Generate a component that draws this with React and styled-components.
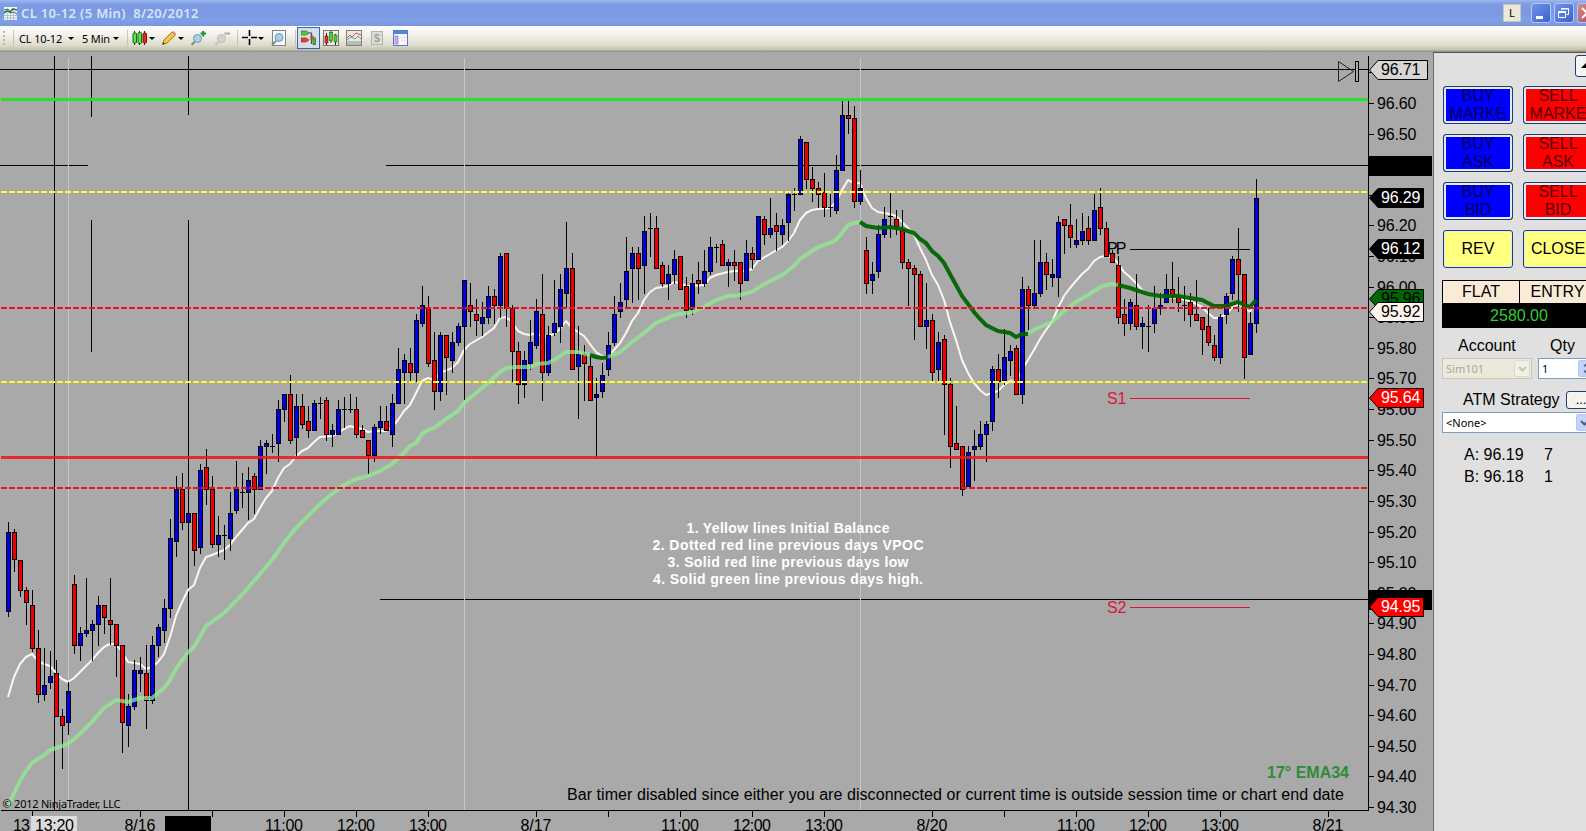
import React from 'react';
import styled, { createGlobalStyle } from 'styled-components';

const GlobalStyle = createGlobalStyle`
  html,
  body {
    margin: 0;
    overflow: hidden;
    background: #a9a9a9;
  }

  * {
    box-sizing: border-box;
  }
`;

const Window = styled.div`
  width: 1586px;
  height: 831px;
  display: flex;
  flex-direction: column;
  overflow: hidden;
  font-family: 'Liberation Sans', Arial, sans-serif;
  color: #000;
`;

const TitleBar = styled.header`
  flex: none;
  height: 26px;
  width: 1600px;
  padding: 0 0 0 4px;
  display: flex;
  align-items: center;
  background: linear-gradient(#9db9ee 0, #7f9de6 4px, #7b99e1 12px, #7e9fe6 20px, #7c96dd 100%);
`;

const Title = styled.span`
  flex: 1;
  margin-left: 4px;
  font: 600 13px/24px 'Noto Sans', sans-serif;
  letter-spacing: 0.34px;
  white-space: pre;
  color: #d8e4f8;
`;

const LinkButton = styled.div`
  width: 18px;
  height: 18px;
  margin-right: 10px;
  background: #ece9d8;
  border: 1px solid #c8c6b4;
  font: 11px/16px 'Noto Sans', sans-serif;
  text-align: center;
`;

const WindowButton = styled.div`
  width: 20px;
  height: 20px;
  margin-right: 3px;
  border: 1px solid #b4c8f6;
  border-radius: 3px;
  background: ${({ $close }) =>
    $close ? 'linear-gradient(135deg, #d08a90, #b0485a)' : 'linear-gradient(135deg, #6f94ea, #3a62cf)'};

  svg {
    display: block;
  }
`;

const Toolbar = styled.nav`
  flex: none;
  height: 26px;
  display: flex;
  align-items: center;
  padding: 0 0 2px 3px;
  background: linear-gradient(#fdfdfb 0, #f4f3ee 8px, #dedccd 19px, #c4c2aa 24px, #96958a 25px);
  font: 11px 'Noto Sans', sans-serif;

  svg {
    display: block;
    flex: none;
  }
`;

const Grip = styled.div`
  width: 2px;
  height: 15px;
  background: repeating-linear-gradient(#b9b7a6 0 2px, transparent 2px 4px);
`;

const Separator = styled.div`
  width: 1px;
  height: 17px;
  margin-left: ${({ $gap }) => $gap}px;
  background: #c9c7b8;
`;

const ToolLabel = styled.span`
  width: ${({ $width }) => $width}px;
  margin-left: ${({ $gap }) => $gap}px;
  letter-spacing: -0.15px;
  white-space: nowrap;
`;

const Caret = styled.i`
  margin-left: ${({ $gap }) => $gap}px;
  border: 3px solid transparent;
  border-top-color: #000;
  border-bottom: 0;
`;

const Tool = styled.div`
  width: 16px;
  height: 16px;
  margin-left: ${({ $gap }) => $gap}px;
`;

const ActiveTool = styled.div`
  width: 23px;
  height: 22px;
  margin-left: 1px;
  padding: 2px 3px;
  border: 1px solid #3f62ad;
  background: #d5dcea;
`;

const Workspace = styled.main`
  flex: 1;
  display: flex;
  min-height: 0;
`;

const ChartSvg = styled.svg`
  flex: none;
  display: block;
  background: #a9a9a9;
  font-family: 'Liberation Sans', Arial, sans-serif;
  font-size: 16px;
`;

const Panel = styled.aside`
  flex: 1;
  padding: 2px 0 0 9px;
  border-left: 1px solid #6f6d60;
  border-top: 1px solid #55534b;
  background: #e0e0e0;
  overflow: hidden;
  font-size: 16px;
`;

const CollapseButton = styled.div`
  width: 22px;
  height: 22px;
  margin: 0 0 9px 132px;
  padding: 7px 5px;
  border: 1px solid #1c3f73;
  border-radius: 3px;
  background: #f6f6f2;
`;

const OrderGrid = styled.div`
  display: grid;
  grid-template-columns: 70px 70px;
  grid-auto-rows: 38px;
  gap: 10px;
  width: 150px;
`;

const OrderButton = styled.div`
  display: flex;
  align-items: center;
  justify-content: center;
  border: 1px solid #1c3f73;
  border-radius: 3px;
  background: ${({ $color }) => $color};
  box-shadow: inset 0 0 0 ${({ $plain }) => ($plain ? 1 : 2)}px #e4ebf6;
  line-height: 18px;
  text-align: center;
  overflow: hidden;
  color: ${({ $ink }) => $ink || '#000'};
`;

const Position = styled.div`
  display: grid;
  grid-template-columns: 76px 76px;
  width: 153px;
  margin: 12px 0 0 -1px;
  border: 1px solid #000;
  background: #faebd7;
  line-height: 22px;
  text-align: center;

  > :nth-child(2) {
    border-left: 1px solid #000;
  }
`;

const Pnl = styled.div`
  grid-column: span 2;
  height: 24px;
  line-height: 25px;
  background: #000;
  color: #32cd32;
`;

const FieldLabels = styled.div`
  display: flex;
  height: 30px;
  padding-left: 15px;
  line-height: 36px;

  > :first-child {
    width: 92px;
  }
`;

const FieldRow = styled.div`
  display: flex;
  width: 170px;
  margin-left: -1px;
`;

const Field = styled.div`
  flex: none;
  display: flex;
  align-items: center;
  justify-content: space-between;
  width: ${({ $width }) => $width}px;
  height: 21px;
  padding: 1px 1px 1px 3px;
  border: 1px solid ${({ $disabled }) => ($disabled ? '#c9c7ba' : '#7f9db9')};
  background: ${({ $disabled }) => ($disabled ? '#ebe9da' : '#fff')};
  color: ${({ $disabled }) => ($disabled ? '#aca899' : '#000')};
  font: 11px 'Noto Sans', sans-serif;

  & + & {
    margin-left: 6px;
  }
`;

const FieldButton = styled.span`
  display: flex;
  align-items: center;
  justify-content: center;
  width: 16px;
  height: 17px;
  border-radius: 2px;
  border: 1px solid ${({ $disabled }) => ($disabled ? '#dbd9cb' : '#b6c8f4')};
  background: ${({ $disabled }) => ($disabled ? '#f1f0e6' : '#c3d3fb')};
`;

const StrategyRow = styled.div`
  display: flex;
  align-items: center;
  height: 33px;
  width: 170px;
  padding: 8px 0 0 20px;
  white-space: nowrap;
`;

const MoreButton = styled.div`
  width: 32px;
  height: 18px;
  margin-left: 6px;
  border: 1px solid #1c3f73;
  border-radius: 3px;
  background: #f4f3ee;
  font-size: 13px;
  line-height: 16px;
  padding-left: 9px;
`;

const Quotes = styled.div`
  display: grid;
  grid-template-columns: 80px 20px;
  padding: 11px 0 0 21px;
  line-height: 22px;
`;

// One row per bar: [high, body top, body bottom, low, kind], in chart pixels.
const U = '#0000e0';
const D = '#ee0000';
const N = null;
const bars = [
  [522, 532, 612, 617, U], [529, 532, 560, 572, D], [560, 560, 591, 597, D], [587, 590, 603, 625, D],
  [590, 605, 649, 652, D], [630, 648, 695, 703, D], [648, 685, 695, 701, U], [651, 676, 683, 689, U],
  [660, 673, 717, 717, D], [709, 716, 726, 769, D], [682, 691, 723, 735, U], [575, 584, 646, 654, D],
  [627, 633, 646, 661, U], [578, 630, 634, 637, U], [620, 624, 631, 661, U], [596, 605, 625, 646, U],
  [605, 605, 618, 634, D], [578, 620, 625, 645, D], [624, 624, 646, 677, D], [645, 645, 723, 753, D],
  [694, 706, 726, 747, U], [660, 670, 707, 710, U], [657, 670, 674, 692, U], [645, 673, 701, 729, D],
  [636, 645, 701, 704, U], [624, 627, 646, 657, U], [599, 608, 631, 643, U], [519, 538, 609, 618, U],
  [476, 489, 542, 557, U], [473, 489, 523, 530, D], [495, 513, 523, 533, U], [513, 513, 551, 566, D],
  [464, 470, 548, 554, U], [449, 467, 490, 505, D], [476, 489, 545, 548, D], [516, 535, 545, 557, U],
  [525, 535, 535, 560, N], [492, 513, 539, 551, U], [461, 489, 511, 514, U], [473, 492, 492, 508, N],
  [467, 480, 493, 520, U], [473, 476, 490, 514, D], [440, 446, 490, 490, U], [440, 443, 447, 474, U],
  [434, 446, 446, 453, N], [400, 409, 444, 462, U], [394, 394, 410, 422, U], [375, 394, 441, 444, D],
  [394, 406, 438, 456, U], [394, 406, 425, 429, D], [406, 421, 431, 438, D], [400, 403, 431, 431, U],
  [397, 403, 403, 419, N], [397, 400, 435, 441, D], [424, 430, 435, 447, U], [400, 409, 435, 435, U],
  [397, 409, 409, 428, N], [394, 409, 409, 413, N], [397, 409, 435, 438, D], [425, 430, 438, 438, D],
  [440, 440, 456, 474, D], [424, 427, 456, 462, U], [406, 421, 428, 434, U], [406, 421, 431, 431, D],
  [394, 403, 435, 447, U], [348, 369, 404, 404, U], [354, 360, 373, 404, U], [348, 363, 373, 382, D],
  [314, 320, 373, 382, U], [286, 305, 324, 327, U], [296, 308, 364, 367, D], [332, 360, 392, 410, D],
  [332, 335, 392, 401, U], [335, 335, 358, 395, D], [332, 342, 361, 373, U], [323, 326, 343, 346, U],
  [280, 280, 327, 400, U], [283, 305, 312, 327, D], [299, 314, 321, 336, D], [302, 317, 324, 336, U],
  [286, 296, 318, 324, U], [289, 296, 306, 324, D], [253, 256, 306, 318, U], [253, 253, 309, 327, D],
  [305, 308, 352, 382, D], [342, 351, 385, 404, D], [351, 360, 385, 398, U], [320, 342, 364, 370, U],
  [299, 311, 346, 349, U], [274, 314, 373, 401, D], [326, 335, 373, 376, U], [280, 323, 333, 336, U],
  [274, 289, 327, 343, U], [222, 268, 294, 308, U], [253, 268, 370, 370, D], [326, 354, 367, 419, U],
  [345, 354, 364, 401, D], [357, 366, 401, 401, D], [378, 394, 398, 459, U], [363, 375, 392, 398, U],
  [332, 345, 370, 376, U], [296, 314, 343, 346, U], [283, 302, 312, 318, U], [237, 271, 300, 307, U],
  [247, 253, 269, 303, U], [247, 253, 269, 300, D], [216, 231, 266, 294, U], [213, 228, 228, 257, N],
  [216, 228, 269, 269, D], [262, 265, 284, 287, D], [265, 274, 284, 300, U], [250, 259, 275, 284, U],
  [256, 256, 290, 290, D], [277, 286, 311, 318, D], [274, 283, 310, 315, U], [262, 280, 284, 294, D],
  [250, 271, 284, 287, U], [237, 247, 272, 275, U], [244, 247, 247, 263, N], [240, 244, 266, 266, D],
  [259, 262, 266, 287, U], [250, 262, 266, 281, D], [262, 262, 284, 300, D], [240, 253, 281, 281, U],
  [247, 253, 260, 269, D], [216, 216, 260, 260, U], [216, 219, 235, 245, D], [198, 228, 235, 238, U],
  [213, 225, 232, 251, D], [219, 225, 235, 245, U], [191, 194, 223, 241, U], [188, 194, 194, 211, N],
  [136, 139, 195, 195, U], [142, 142, 180, 189, D], [167, 179, 189, 202, D], [182, 188, 195, 208, D],
  [173, 192, 208, 217, D], [194, 207, 207, 217, N], [155, 170, 211, 214, U], [100, 115, 171, 171, U],
  [100, 115, 119, 134, D], [106, 118, 202, 208, D], [170, 188, 202, 205, U], [237, 250, 284, 294, D],
  [262, 274, 281, 294, U], [225, 234, 272, 278, U], [207, 219, 235, 238, U], [191, 216, 216, 238, N],
  [210, 219, 227, 235, D], [210, 230, 263, 269, D], [259, 262, 269, 306, D], [265, 268, 275, 340, D],
  [271, 274, 327, 327, D], [283, 320, 327, 349, U], [314, 320, 373, 382, D], [332, 342, 370, 382, U],
  [335, 339, 385, 435, D], [378, 384, 447, 468, D], [406, 443, 450, 450, D], [446, 446, 490, 496, D],
  [446, 452, 487, 487, U], [430, 446, 450, 481, U], [421, 434, 447, 450, U], [421, 424, 435, 462, U],
  [366, 369, 422, 431, U], [354, 369, 382, 398, D], [329, 357, 382, 385, U], [345, 351, 361, 376, U],
  [345, 348, 395, 395, D], [277, 289, 395, 404, U], [286, 289, 306, 330, D], [240, 293, 306, 309, U],
  [240, 262, 294, 297, U], [253, 262, 275, 290, D], [259, 274, 278, 287, U], [216, 222, 278, 297, U],
  [219, 219, 226, 254, D], [204, 225, 238, 248, D], [219, 240, 245, 248, U], [213, 231, 241, 245, U],
  [216, 228, 241, 245, D], [194, 210, 241, 241, U], [188, 207, 229, 235, D], [222, 228, 257, 257, D],
  [250, 253, 263, 263, D], [256, 265, 318, 324, D], [299, 314, 324, 336, D], [299, 302, 324, 330, U],
  [274, 305, 327, 330, D], [317, 323, 327, 349, U], [305, 326, 326, 352, N], [286, 308, 324, 333, U],
  [293, 305, 309, 315, U], [274, 289, 303, 303, U], [262, 289, 295, 303, D], [277, 297, 303, 312, D],
  [286, 305, 305, 321, N], [293, 302, 315, 327, D], [280, 314, 321, 321, D], [317, 317, 330, 355, D],
  [308, 326, 343, 346, D], [335, 345, 358, 361, D], [314, 317, 358, 364, U], [293, 296, 315, 324, U],
  [256, 259, 294, 300, U], [228, 259, 275, 312, D], [274, 274, 358, 379, D], [312, 323, 355, 355, U],
  [179, 198, 324, 333, U],
];

const fastAverage =
  '8,697 14,677 20,664 26,657 32,654 38,661 44,664 50,666 56,673 62,679 68,682 74,678 92,660 98,653 104,647 110,644 116,644 122,652 128,662 140,664 146,669 152,667 158,662 164,654 170,637 176,616 182,602 188,590 194,585 200,568 206,557 212,555 224,550 230,545 236,537 242,530 248,523 254,519 260,508 266,498 272,491 278,478 284,468 290,464 296,456 302,451 308,448 314,442 320,437 332,436 338,433 344,429 350,426 356,428 362,429 368,432 374,431 386,431 392,427 398,420 404,411 410,405 416,393 422,381 428,378 434,380 440,373 452,368 458,362 464,350 470,344 482,337 494,328 500,318 506,317 512,322 518,331 524,334 530,335 536,333 542,337 548,336 554,334 560,329 566,321 572,328 578,332 584,336 590,344 596,352 602,356 608,356 614,350 620,343 626,333 632,321 638,313 644,300 650,292 656,288 662,287 668,286 674,282 680,283 686,286 692,286 704,285 710,278 716,275 728,272 734,271 746,271 752,269 758,261 770,254 782,247 788,241 794,233 800,220 806,213 812,210 818,209 830,208 836,202 842,190 848,180 854,183 860,183 866,198 872,208 878,212 890,214 896,216 902,222 908,228 914,235 920,248 926,260 932,275 938,285 944,300 950,322 956,340 962,360 968,373 974,383 980,390 986,395 992,393 998,391 1004,385 1010,381 1016,382 1022,370 1028,360 1034,350 1040,339 1046,330 1052,322 1058,308 1064,296 1070,288 1076,281 1082,274 1088,269 1094,261 1100,257 1106,256 1112,257 1118,263 1124,272 1130,277 1136,283 1142,290 1148,294 1154,296 1166,297 1178,298 1190,301 1196,304 1202,307 1208,313 1214,318 1220,318 1226,314 1232,308 1238,304 1244,308 1250,312 1256,300';

const emaRising = [
  '8,808 11,800 20,781 26,771 32,763 44,755 50,750 56,748 62,746 68,744 80,734 92,722 104,708 116,700 128,702 140,698 152,698 158,693 164,688 170,680 176,669 188,652 194,647 206,626 224,613 240,597 260,574 272,560 284,543 296,528 308,516 320,504 332,494 344,485 356,479 368,476 380,471 392,464 403,454 410,446 416,443 422,434 428,430 434,428 446,419 458,411 464,403 476,393 488,383 500,372 506,368 518,367 530,367 536,364 548,363 554,360 566,352 578,352 590,355',
  '608,357 620,352 632,342 644,333 656,323 668,318 674,315 686,313 692,312 704,307 716,300 728,296 740,295 752,292 758,288 770,281 782,275 794,266 800,259 812,251 818,247 830,243 836,240 842,233 848,225 854,223 860,222',
  '1028,333 1040,327 1052,322 1064,311 1076,302 1088,295 1100,287 1106,285 1112,284 1118,285',
];
const emaFalling = [
  '590,355 596,357 602,358 608,357',
  '860,222 866,226 878,228 890,227 902,229 914,233 920,239 926,243 932,251 938,256 944,263 950,274 962,296 974,312 980,319 986,325 998,331 1010,333 1016,337 1022,334 1028,334',
  '1118,285 1130,288 1148,294 1160,296 1178,296 1190,298 1202,300 1214,306 1226,306 1238,302 1244,305 1250,307 1256,300',
];

const levels = [
  { y: 98, color: '#2be02b', size: 3 },
  { y: 191, color: '#ffff20', size: 2, dashed: true },
  { y: 307, color: '#ee1020', size: 2, dashed: true },
  { y: 381, color: '#ffff20', size: 2, dashed: true },
  { y: 456, color: '#f01818', size: 3, opacity: 0.88 },
  { y: 487, color: '#ee1020', size: 2, dashed: true },
];

const pivots = [
  { label: 'PP', y: 249, baseline: 254, color: '#000' },
  { label: 'S1', y: 398, baseline: 404, color: '#dc143c' },
  { label: 'S2', y: 607, baseline: 613, color: '#dc143c' },
];

const timeTicks = [
  [32], [140, '8/16'], [212], [284, '11:00'], [356, '12:00'], [428, '13:00'], [536, '8/17'], [608],
  [680, '11:00'], [752, '12:00'], [824, '13:00'], [932, '8/20'], [1004], [1076, '11:00'], [1148, '12:00'],
  [1220, '13:00'], [1328, '8/21'],
];

const tags = [
  { price: '96.71', y: 60, fill: '#d6d6d6', ink: '#000', right: 1427 },
  { price: '96.29', y: 188, fill: '#000', ink: '#fff' },
  { price: '96.12', y: 239, fill: '#000', ink: '#fff' },
  { price: '95.96', y: 289, fill: '#006400', ink: '#000' },
  { price: '95.92', y: 302, fill: '#fff5ee', ink: '#000' },
  { price: '95.64', y: 388, fill: '#ff0000', ink: '#fff' },
  { price: '94.95', y: 597, fill: '#ff0000', ink: '#fff' },
];

const notes = [
  ['1. Yellow lines Initial Balance', 533, 203],
  ['2. Dotted red line previous days VPOC', 550, 271],
  ['3. Solid red line previous days low', 567, 241],
  ['4. Solid green line previous days high.', 584, 270],
];

const priceToY = price => 103.5 + (96.6 - price) * 306.1;
const prices = Array.from({ length: 25 }, (_, i) => (96.7 - i * 0.1).toFixed(2));

// scale labels that sit entirely behind a marker
const coveredPrices = ['96.70', '96.40', '96.30'];

const Candle = ({ index, bar: [high, top, bottom, low, fill] }) => {
  const x = 6 + index * 6;
  return (
    <g>
      <rect x={x + 2} y={high} width="1" height={Math.max(low - high, 1)} />
      <rect x={x} y={top} width="5" height={Math.max(bottom - top, 1)} />
      {fill && <rect x={x + 1} y={top + 1} width="3" height={bottom - top - 2} fill={fill} />}
    </g>
  );
};

const PriceTag = ({ price, y, fill, ink, right = 1423 }) => (
  <g>
    <path
      d={`M1369.5 ${y + 10} L1378 ${y + 0.5} H${right + 0.5} V${y + 19.5} H1378 Z`}
      fill={fill}
      stroke="#000"
    />
    <text x="1381" y={y + 15} fill={ink} textLength="39.5">
      {price}
    </text>
  </g>
);

const Chart = () => (
  <ChartSvg width="1433" height="779" viewBox="0 52 1433 779">
    <g shapeRendering="crispEdges">
      <rect x="0" y="69" width="1368" height="1" />
      <rect x="0" y="165" width="88" height="1" />
      <rect x="386" y="165" width="982" height="1" />
      <rect x="380" y="599" width="988" height="1" />
      <rect x="54" y="56" width="1" height="754" />
      <rect x="91" y="56" width="1" height="61" />
      <rect x="91" y="220" width="1" height="132" />
      <rect x="188" y="56" width="1" height="59" />
      <rect x="188" y="220" width="1" height="590" />
      {[68, 464, 860].map(x => (
        <rect key={x} x={x} y="58" width="1" height="752" fill="#c6c6c6" />
      ))}
    </g>

    <polyline points={fastAverage} fill="none" stroke="#fff5ee" strokeWidth="2" strokeLinejoin="round" />

    <g shapeRendering="crispEdges">
      {bars.map((bar, i) => (
        <Candle key={i} index={i} bar={bar} />
      ))}
    </g>

    {emaRising.map(points => (
      <polyline key={points} points={points} fill="none" stroke="#90ee90" strokeOpacity="0.72" strokeWidth="4" />
    ))}
    {emaFalling.map(points => (
      <polyline key={points} points={points} fill="none" stroke="#006400" strokeOpacity="0.95" strokeWidth="4" />
    ))}

    <g shapeRendering="crispEdges">
      {levels.map(({ y, color, size, dashed, opacity }) => (
        <line
          key={y}
          x1="1"
          x2="1368"
          y1={y + size / 2}
          y2={y + size / 2}
          stroke={color}
          strokeWidth={size}
          strokeOpacity={opacity}
          strokeDasharray={dashed ? '6 2' : undefined}
        />
      ))}
    </g>

    {pivots.map(({ label, y, baseline, color }) => (
      <g key={label} fill={color}>
        <text x="1107" y={baseline} textLength="19.5">
          {label}
        </text>
        <rect x="1130" y={y} width="120" height="1" />
      </g>
    ))}

    <path d="M1338.5 61.5 V81.5 L1353.5 71.5 Z" fill="none" stroke="#222" />
    <rect x="1355.5" y="61.5" width="3" height="20" fill="#a9a9a9" stroke="#000" />

    <g fill="#fff" fontSize="14" fontWeight="bold" textAnchor="middle">
      {notes.map(([text, y, width]) => (
        <text key={y} x="788" y={y} textLength={width}>
          {text}
        </text>
      ))}
    </g>

    <text x="1267" y="778" textLength="82" fontWeight="bold" fill="#2e8b37">
      17° EMA34
    </text>
    <text x="567" y="800" textLength="777">
      Bar timer disabled since either you are disconnected or current time is outside session time or chart end date
    </text>
    <text x="2.5" y="808" textLength="118" fontSize="11" fontFamily="'Noto Sans', sans-serif">
      © 2012 NinjaTrader, LLC
    </text>

    <g shapeRendering="crispEdges">
      <rect x="1368" y="56" width="1" height="755" />
      <rect x="1" y="810" width="1368" height="1" />
    </g>

    {timeTicks.map(([x, label]) => (
      <g key={x}>
        <rect x={x} y="811" width="1" height="6" />
        {label && (
          <text x={x} y="830.5" textAnchor="middle" textLength={label.length > 4 ? 38 : 31}>
            {label}
          </text>
        )}
      </g>
    ))}
    <text x="13" y="830.5" textLength="17">
      13
    </text>
    <rect x="31" y="816" width="46" height="15" fill="#dcdcdc" />
    <text x="35" y="830.5" textLength="39">
      13:20
    </text>
    <rect x="165" y="816" width="46" height="15" />

    {prices.map(price => {
      const y = Math.round(priceToY(price) - 0.5);
      return (
        <g key={price}>
          <rect x="1369" y={y} width="5" height="1" />
          {!coveredPrices.includes(price) && (
            <text x="1377" y={y + 5.6} textLength="39.5">
              {price}
            </text>
          )}
        </g>
      );
    })}
    <rect x="1368" y="156" width="64" height="20" />
    <rect x="1368" y="590" width="64" height="20" />
    {tags.map(tag => (
      <PriceTag key={tag.price} {...tag} />
    ))}
  </ChartSvg>
);

const Chevron = ({ color = '#4d6185' }) => (
  <svg width="9" height="6" viewBox="0 0 9 6">
    <path d="M1 1 L4.5 4.5 L8 1" fill="none" stroke={color} strokeWidth="2" />
  </svg>
);

const ChartIcon = () => (
  <svg width="13" height="13" viewBox="0 0 13 13">
    <rect width="13" height="13" fill="#f2f4f0" />
    <path d="M0 8.5H13M0 11H13M3.5 6V13M6.5 6V13M9.5 6V13" stroke="#b5bfd0" />
    <path d="M0 6 L3 4 L6 5 L9 2 L13 3" fill="none" stroke="#1f7a3a" strokeWidth="1.6" />
    <path d="M0 3 L4 2 L7 6 L10 5 L13 7" fill="none" stroke="#3a5d9c" />
  </svg>
);

const CandlesIcon = () => (
  <svg width="16" height="16" viewBox="0 0 16 16">
    <path d="M2.5 1V15M7.5 1V15M12.5 1V15" stroke="#222" />
    <rect x="1" y="3" width="3.5" height="10" rx="1" fill="#5ae53c" stroke="#156a15" />
    <rect x="6" y="2.5" width="3.5" height="11" rx="1" fill="#5ae53c" stroke="#156a15" />
    <rect x="11" y="3" width="3.5" height="10" rx="1" fill="#e8281c" stroke="#7a1414" />
  </svg>
);

const PencilIcon = () => (
  <svg width="16" height="16" viewBox="0 0 16 16">
    <path d="M1.5 14.5 L3 10 L11 2 L14.5 5 L6 13 Z" fill="#f3c83c" stroke="#a8761c" />
    <path d="M11 2 L12.5 1 L15 3.5 L14.2 5 Z" fill="#d98d80" />
    <path d="M1.5 14.5 L2.3 12 L4 13.6 Z" fill="#333" />
  </svg>
);

const MagnifierIcon = ({ sign, faded }) => (
  <svg width="17" height="16" viewBox="0 0 17 16">
    <path d="M1.5 15 L5 11.5" stroke={faded ? '#c2c1ba' : '#8b8577'} strokeWidth="2" />
    <circle cx="7.5" cy="8.5" r="4" fill={faded ? '#d3d3d1' : '#a8cfe8'} stroke={faded ? '#bdbdb8' : '#7196b5'} />
    <path
      d={sign === '+' ? 'M10.5 3.5H16M13.2 1V6.5' : 'M10.5 3.5H16'}
      stroke={faded ? '#aaa9a2' : '#109a20'}
      strokeWidth="2"
    />
  </svg>
);

const CrosshairIcon = () => (
  <svg width="15" height="15" viewBox="0 0 15 15">
    <path d="M0 7.5H6M9 7.5H15M7.5 0V6M7.5 9V15" stroke="#000" strokeWidth="1.6" />
  </svg>
);

const ZoomFrameIcon = () => (
  <svg width="16" height="16" viewBox="0 0 16 16">
    <rect x="1.5" y=".5" width="13" height="15" fill="#f8f9fa" stroke="#7d8591" />
    <path d="M1 15 L5 11" stroke="#8b8577" strokeWidth="2" />
    <circle cx="8" cy="7.5" r="4" fill="#a8cfe8" stroke="#7196b5" />
  </svg>
);

const TraderIcon = () => (
  <svg width="16" height="16" viewBox="0 0 16 16">
    <path d="M0 1H5L8 3L5 5H0Z" fill="#4fce30" stroke="#2a7d1c" strokeWidth=".7" />
    <path d="M0 8H5L8 10L5 12H0Z" fill="#e0482c" stroke="#9c2617" strokeWidth=".7" />
    <path d="M8 3H10.5V14M10.5 7H13M13 8V15" fill="none" stroke="#4a544a" strokeWidth="1.2" />
    <rect x="12" y="8" width="2.6" height="6.5" fill="#46c832" stroke="#1d6a16" strokeWidth=".7" />
    <rect x="9.5" y="5" width="2" height="5" fill="#d83424" />
  </svg>
);

const CandlesFrameIcon = () => (
  <svg width="16" height="16" viewBox="0 0 16 16">
    <rect x=".5" y=".5" width="15" height="15" fill="#eceeea" stroke="#76796e" />
    <path d="M3.5 3V15M8 1V13M12.5 4V15" stroke="#222" />
    <rect x="2" y="6" width="3" height="7" fill="#e0301c" stroke="#701010" strokeWidth=".6" />
    <rect x="6.5" y="2.5" width="3" height="8" fill="#4ed637" stroke="#145f14" strokeWidth=".6" />
    <rect x="11" y="5" width="3" height="7" fill="#4ed637" stroke="#145f14" strokeWidth=".6" />
  </svg>
);

const IndicatorIcon = () => (
  <svg width="16" height="16" viewBox="0 0 16 16">
    <rect x=".5" y=".5" width="15" height="15" fill="#e6e8e6" stroke="#7e817b" />
    <path d="M1 13H15" stroke="#b9bcb9" strokeWidth="4" />
    <path d="M1 8 L4 5 L6 7 L10 3 L15 5" fill="none" stroke="#cc5a5a" />
    <path d="M1 10 L5 7 L9 9 L12 6 L15 9" fill="none" stroke="#63a386" />
  </svg>
);

const StrategyIcon = () => (
  <svg width="12" height="16" viewBox="0 0 12 16">
    <rect x=".5" y="1.5" width="11" height="13" fill="#dcdcd6" stroke="#b5b4ac" />
    <text x="6" y="12" textAnchor="middle" fontSize="11" fontWeight="bold" fill="#9c9c96">
      S
    </text>
  </svg>
);

const PropertiesIcon = () => (
  <svg width="15" height="16" viewBox="0 0 15 16">
    <rect x=".5" y=".5" width="14" height="15" fill="#f4f6fb" stroke="#5c78b4" />
    <rect x="1" y="1" width="13" height="3" fill="#5a82d8" />
    <rect x="2" y="6" width="3" height="8" fill="#c4b8f0" stroke="#7c6cc4" strokeWidth=".6" />
    <path d="M8 7.5H13M8 10.5H13" stroke="#e0e4ee" />
  </svg>
);

const orders = [
  ['BUY', 'MARKE', '#0000ff', '#000050'],
  ['SELL', 'MARKE', '#ff0000', '#500000'],
  ['BUY', 'ASK', '#0000ff', '#000050'],
  ['SELL', 'ASK', '#ff0000', '#500000'],
  ['BUY', 'BID', '#0000ff', '#000050'],
  ['SELL', 'BID', '#ff0000', '#500000'],
];

const OrderPanel = () => (
  <Panel>
    <CollapseButton>
      <svg width="10" height="5" viewBox="0 0 10 5" display="block">
        <path d="M5 0 L10 5 H0 Z" />
      </svg>
    </CollapseButton>
    <OrderGrid>
      {orders.map(([side, type, color, ink]) => (
        <OrderButton key={side + type} $color={color} $ink={ink}>
          {side}
          <br />
          {type}
        </OrderButton>
      ))}
      <OrderButton $color="#ffff80" $plain>
        REV
      </OrderButton>
      <OrderButton $color="#ffff80" $plain>
        CLOSE
      </OrderButton>
    </OrderGrid>
    <Position>
      <div>FLAT</div>
      <div>ENTRY</div>
      <Pnl>2580.00</Pnl>
    </Position>
    <FieldLabels>
      <span>Account</span>
      <span>Qty</span>
    </FieldLabels>
    <FieldRow>
      <Field $width={90} $disabled>
        Sim101
        <FieldButton $disabled>
          <Chevron color="#c5c3b6" />
        </FieldButton>
      </Field>
      <Field $width={58}>
        1
        <FieldButton>
          <svg width="7" height="13" viewBox="0 0 7 13">
            <path d="M1 4.5 L3.5 2 L6 4.5 M1 8.5 L3.5 11 L6 8.5" fill="none" stroke="#4d6185" strokeWidth="1.6" />
          </svg>
        </FieldButton>
      </Field>
    </FieldRow>
    <StrategyRow>
      ATM Strategy
      <MoreButton>...</MoreButton>
    </StrategyRow>
    <FieldRow>
      <Field $width={152}>
        &lt;None&gt;
        <FieldButton>
          <Chevron />
        </FieldButton>
      </Field>
    </FieldRow>
    <Quotes>
      <span>A: 96.19</span>
      <span>7</span>
      <span>B: 96.18</span>
      <span>1</span>
    </Quotes>
  </Panel>
);

const App = () => (
  <>
    <GlobalStyle />
    <Window>
      <TitleBar>
        <ChartIcon />
        <Title>{'CL 10-12 (5 Min)  8/20/2012'}</Title>
        <LinkButton>L</LinkButton>
        <WindowButton>
          <svg width="18" height="18">
            <rect x="4" y="12" width="7" height="3" fill="#fff" />
          </svg>
        </WindowButton>
        <WindowButton>
          <svg width="18" height="18" fill="none" stroke="#fff">
            <path d="M6.5 6V4.5H13.5V10.5H11.5M6.5 5H13.5" />
            <path d="M3.5 7.5H10.5V13.5H3.5ZM3.5 8.5H10.5" />
          </svg>
        </WindowButton>
        <WindowButton $close>
          <svg width="18" height="18" stroke="#fff" strokeWidth="2">
            <path d="M4 4L14 14M14 4L4 14" />
          </svg>
        </WindowButton>
      </TitleBar>
      <Toolbar>
        <Grip />
        <Separator $gap={8} />
        <ToolLabel $gap={5} $width={49}>CL 10-12</ToolLabel>
        <Caret $gap={0} />
        <ToolLabel $gap={8} $width={31}>5 Min</ToolLabel>
        <Caret $gap={0} />
        <Separator $gap={8} />
        <Tool $gap={4}><CandlesIcon /></Tool>
        <Caret $gap={1} />
        <Tool $gap={6}><PencilIcon /></Tool>
        <Caret $gap={1} />
        <Tool $gap={6}><MagnifierIcon sign="+" /></Tool>
        <Tool $gap={8}><MagnifierIcon sign="-" faded /></Tool>
        <Separator $gap={7} />
        <Tool $gap={4}><CrosshairIcon /></Tool>
        <Caret $gap={0} />
        <Tool $gap={7}><ZoomFrameIcon /></Tool>
        <Separator $gap={8} />
        <ActiveTool><TraderIcon /></ActiveTool>
        <Tool $gap={3}><CandlesFrameIcon /></Tool>
        <Tool $gap={7}><IndicatorIcon /></Tool>
        <Tool $gap={9}><StrategyIcon /></Tool>
        <Tool $gap={6}><PropertiesIcon /></Tool>
      </Toolbar>
      <Workspace>
        <Chart />
        <OrderPanel />
      </Workspace>
    </Window>
  </>
);

export default App;
